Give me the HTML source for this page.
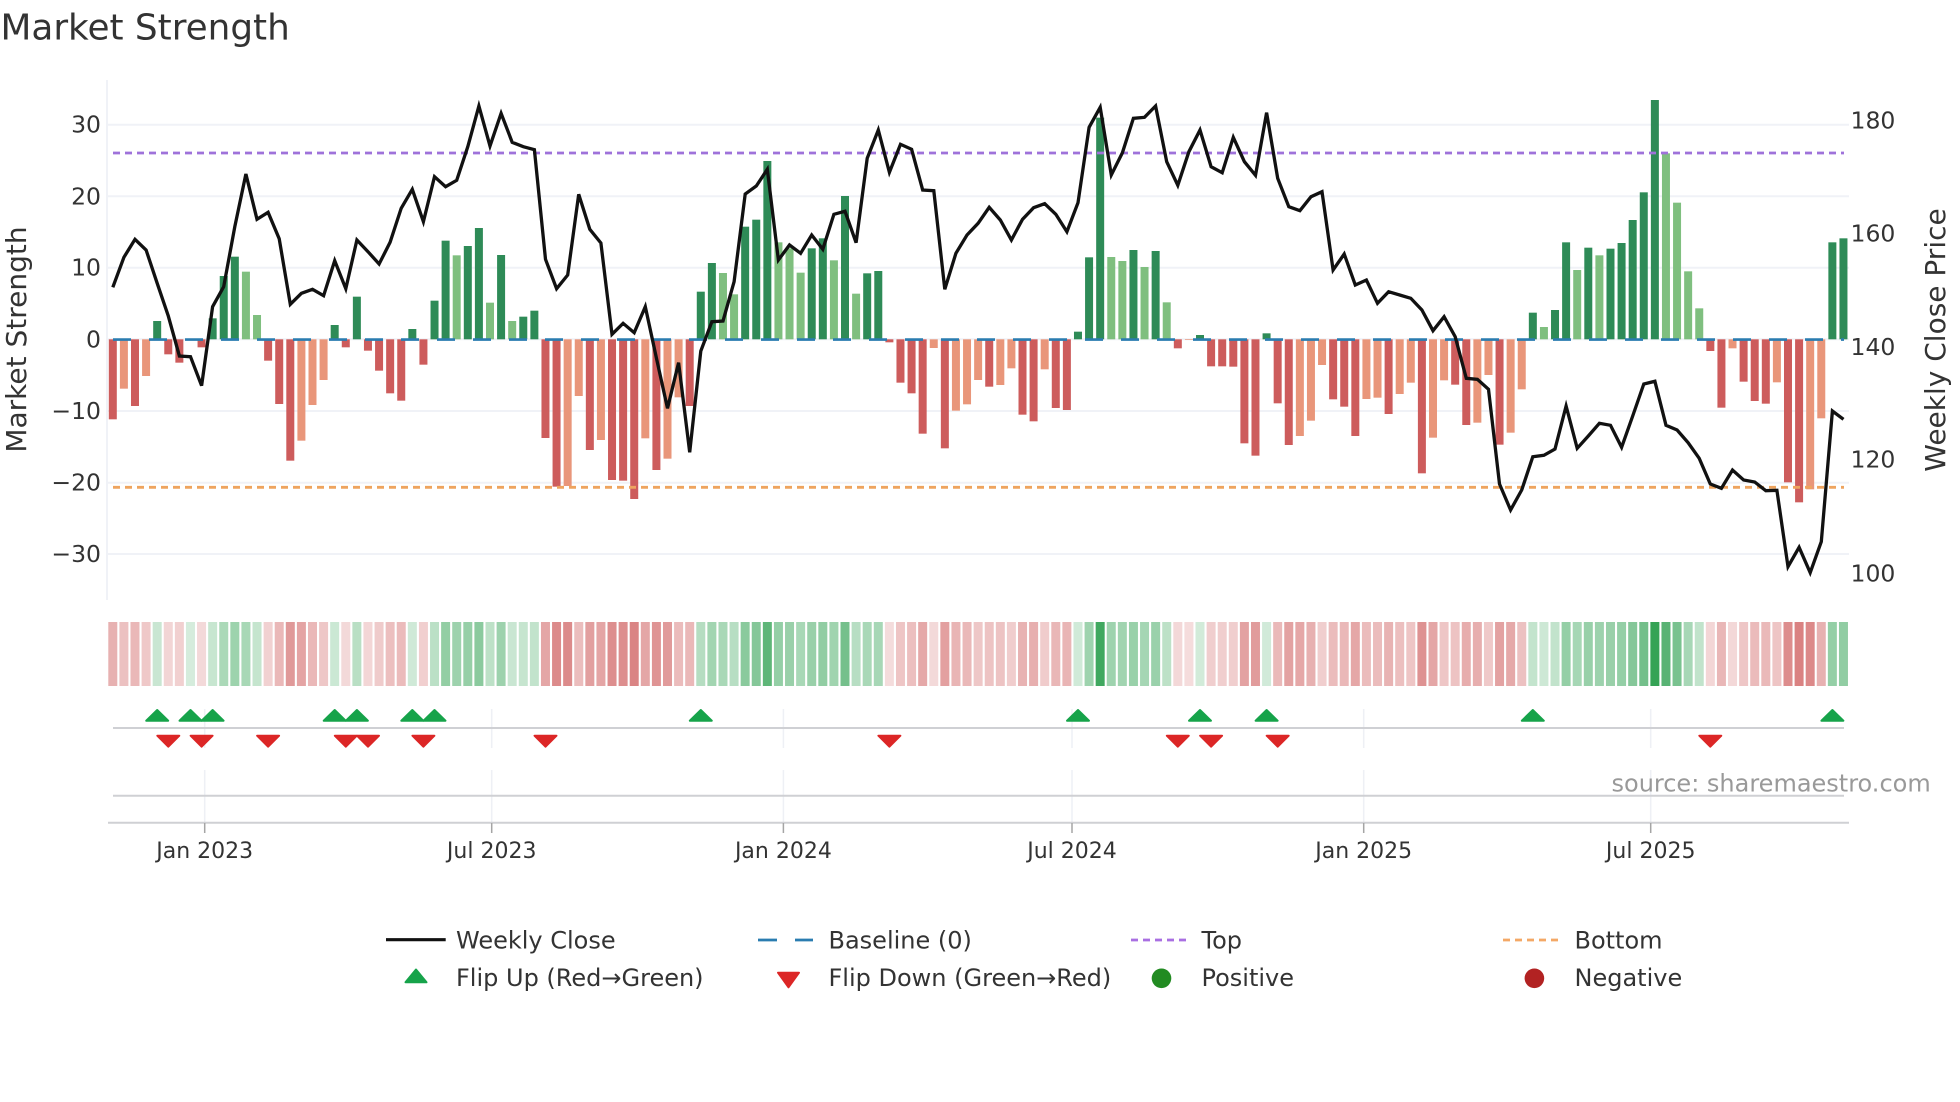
<!DOCTYPE html>
<html lang="en">
<head>
<meta charset="utf-8">
<title>Market Strength</title>
<style>
html,body{margin:0;padding:0;background:#fff;width:1960px;height:1102px;overflow:hidden}
svg{display:block;position:absolute;left:0;top:0}
text{font-family:"DejaVu Sans","Liberation Sans",sans-serif;fill:#333}
</style>
</head>
<body>
<svg id="c" xmlns="http://www.w3.org/2000/svg" width="1960" height="1102" viewBox="0 0 1960 1102">
<rect width="1960" height="1102" fill="#fff"/>
<g stroke="#f0f2f7" stroke-width="2" fill="none">
<path d="M107 80V600"/>
<path d="M107 124.7H1849M107 196.3H1849M107 267.7H1849M107 339.3H1849M107 411H1849M107 482.7H1849M107 554H1849"/>
</g>
<g stroke="#eef0f5" stroke-width="1.5" fill="none">
<path d="M204.7 709V748M204.7 770V823M491.7 709V748M491.7 770V823M783.4 709V748M783.4 770V823M1072 709V748M1072 770V823M1363.7 709V748M1363.7 770V823M1650.7 709V748M1650.7 770V823"/>
</g>
<g id="bars"></g>
<path d="M113 339.6H1844" stroke="#2a7cb0" stroke-width="2.6" stroke-dasharray="18 18" fill="none"/>
<path d="M113 153H1844" stroke="#9f72da" stroke-width="2.8" stroke-dasharray="7 5" fill="none"/>
<path d="M113 487.3H1844" stroke="#eea45f" stroke-width="2.8" stroke-dasharray="7 5" fill="none"/>
<polyline id="close" fill="none" stroke="#111" stroke-width="3.3" stroke-linejoin="miter" points=""/>
<g id="strip"></g>
<g stroke="#cfd0d4" stroke-width="2" fill="none">
<path d="M113 728H1844M113 795.7H1844M108 822.7H1849"/>
</g>
<g stroke="#a5a5a5" stroke-width="1.5" fill="none">
<path d="M204.7 823V833M491.7 823V833M783.4 823V833M1072 823V833M1363.7 823V833M1650.7 823V833"/>
</g>
<g id="flips"></g>

<text x="0.5" y="39.5" font-size="35.8">Market Strength</text>
<text transform="translate(26 339.5) rotate(-90)" text-anchor="middle" font-size="28">Market Strength</text>
<text transform="translate(1945 340) rotate(-90)" text-anchor="middle" font-size="28">Weekly Close Price</text>

<g font-size="23.5" text-anchor="end">
<text x="101" y="132.7">30</text>
<text x="101" y="204.3">20</text>
<text x="101" y="275.7">10</text>
<text x="101" y="347.3">0</text>
<text x="101" y="419">−10</text>
<text x="101" y="490.7">−20</text>
<text x="101" y="562">−30</text>
</g>
<g font-size="23.5">
<text x="1850.500" y="128.3">180</text>
<text x="1850.500" y="241.7">160</text>
<text x="1850.500" y="355">140</text>
<text x="1850.500" y="467.3">120</text>
<text x="1850.500" y="581.3">100</text>
</g>
<g font-size="22" text-anchor="middle">
<text x="204.7" y="858">Jan 2023</text>
<text x="491.7" y="858">Jul 2023</text>
<text x="783.4" y="858">Jan 2024</text>
<text x="1072" y="858">Jul 2024</text>
<text x="1363.7" y="858">Jan 2025</text>
<text x="1650.7" y="858">Jul 2025</text>
</g>
<text x="1611.500" y="791.5" font-size="24" style="fill:#999">source: sharemaestro.com</text>

<path d="M386 939.7H445.7" stroke="#111" stroke-width="3.2" fill="none"/>
<path d="M758 940H777M795 940H813" stroke="#2a7cb0" stroke-width="2.8" fill="none"/>
<path d="M1131 940H1186" stroke="#a96fe2" stroke-width="2.8" stroke-dasharray="7 5" fill="none"/>
<path d="M1503 940H1559" stroke="#f4a866" stroke-width="2.8" stroke-dasharray="7 5" fill="none"/>
<polygon points="416,969.500 426.500,982.300 405.500,982.300" fill="#16a34a" stroke="#16a34a" stroke-width="2" stroke-linejoin="round"/>
<polygon points="778,972.700 799,972.700 788.500,987.300" fill="#dc2626" stroke="#dc2626" stroke-width="2" stroke-linejoin="round"/>
<circle cx="1161.500" cy="978.300" r="9.800" fill="#228b22"/>
<circle cx="1534.400" cy="978.300" r="9.800" fill="#b22222"/>
<g font-size="24">
<text x="456" y="948.300">Weekly Close</text>
<text x="828.500" y="948.300">Baseline (0)</text>
<text x="1201.500" y="948.300">Top</text>
<text x="1574.500" y="948.300">Bottom</text>
<text x="456" y="986">Flip Up (Red→Green)</text>
<text x="828.500" y="986">Flip Down (Green→Red)</text>
<text x="1201.500" y="986">Positive</text>
<text x="1574.500" y="986">Negative</text>
</g>
</svg>
<script>
(function(){
var NS="http://www.w3.org/2000/svg";
function X(i){return 112.8+11.094*i;}
var segs=[
{p:0,n:330,d:"r268 s176 r228 s138 d963 r73 r98 d1017 r52 d955 d828 d770 l815 l945 r92 r222 r392 s332 s225 s150 d975 r52 d890 r62 r122 r190 r212 d987 r104 d902 d722 l766 d738 d684 l908 d765 l963 d950 d932 r324 r470 s468 s198 r360 s330 r450 r452 r507 s325"},
{p:90,n:340,d:"r390 s356 s172 r198 d605 d519 l549 l613 d410 d389 d213 l457 l475 l548 d475 d445 l511 d318 l611 d550 d543 r7 r128 r160 r281 s24 r325 s212 s193 s120 r140 s135 s85 r224 r244 s88 r204 r210 d725 d502 d83 l501 l513 d480 l531 d483 l637 r25 s0 d735 r79 r79 r80 r310 r347 d730 r190 r315 s288"},
{p:90,n:340,d:"s242 s75 r178 r200 r288 s177 s173 r222 s162 s128 r400 s293 s121 r134 r255 s248 s105 r314 s278 s148 d668 l711 d660 d457 l540 d473 l496 d476 d459 d390 d307 d30 l190 l338 l544 l655 r33 r203 s25 r125 r183 r191 s127 r427 r487 s448 s235 d457 d445"}
];
var col={r:"#cd5c5c",s:"#e9967a",d:"#2e8b57",l:"#7fbf7f"};
var base=339.3,idx=0;
var barsG=document.getElementById("bars"),stripG=document.getElementById("strip");
function rect(g,x,y,w,h,f){var r=document.createElementNS(NS,"rect");r.setAttribute("x",x);r.setAttribute("y",y);r.setAttribute("width",w);r.setAttribute("height",h);r.setAttribute("fill",f);g.appendChild(r);}
segs.forEach(function(s){
  s.d.split(" ").forEach(function(t){
    var c=t.charAt(0),v=parseFloat(t.slice(1)),pos=(c==="d"||c==="l");
    var y=(pos?s.p:s.n)+v/3,cx=X(idx),h=Math.abs(y-base);
    rect(barsG,(cx-4).toFixed(2),(pos?y:base).toFixed(2),8,Math.max(h,0).toFixed(2),col[c]);
    var val=h/7.16,a;
    if(pos){a=Math.min(1,.2+.023*val);
      rect(stripG,(cx-4.5).toFixed(2),622,9,64,"rgba(46,160,80,"+a.toFixed(3)+")");
    }else{a=Math.min(1,.17+.02*val);
      rect(stripG,(cx-4.5).toFixed(2),622,9,64,"rgba(195,55,55,"+a.toFixed(3)+")");
    }
    idx++;
  });
});
var z1=[862,772,718,750,850,948];
var ys=z1.map(function(v){return v/3;});
ys=ys.concat([356,356.7,385.7]);
[920,860,680,522,658,637,716,913,880,868,887,782,866,720,755,792,727,625,568,665,530,560,541,440,318,438,340,427,440,449,778,866,825,583,688,729,1003,970,998,920].forEach(function(v){ys.push(v/3);});
ys=ys.concat([358,408.3,362.7,452.3,351]);
[695,693,575,312,288,238,510,465,490,435,478,373,364,458,205,120,247,163,178,300,302,598,490,435,400,352,390,450,388,353,341,373,425,338,112,52,255,188,85,82,48,215,286,185,120,230,248,142,215,256,68,265,350,362,320,305,540,492,585,570,640,605,615,625,660,722,680,740].forEach(function(v){ys.push(90+v/3);});
[115,118,148,432,510,450,350,346,327,198,325,288,250,256,322,228,132,124,256,270,308,355,432,445,390,420,426,452,451,680,622,698,605,213,238].forEach(function(v){ys.push(340+v/3);});
document.getElementById("close").setAttribute("points",ys.map(function(y,i){return X(i).toFixed(1)+","+y.toFixed(1);}).join(" "));
var fg=document.getElementById("flips");
function tri(pts,f){var p=document.createElementNS(NS,"polygon");p.setAttribute("points",pts);p.setAttribute("fill",f);p.setAttribute("stroke",f);p.setAttribute("stroke-width","2");p.setAttribute("stroke-linejoin","round");fg.appendChild(p);}
[4,7,9,20,22,27,29,53,87,98,104,128,155].forEach(function(i){var x=X(i);
  tri((x).toFixed(1)+",710 "+(x+11).toFixed(1)+",720.700 "+(x-11).toFixed(1)+",720.700","#16a34a");});
[5,8,14,21,23,28,39,70,96,99,105,144].forEach(function(i){var x=X(i);
  tri((x-11).toFixed(1)+",735.700 "+(x+11).toFixed(1)+",735.700 "+(x).toFixed(1)+",746.700","#dc2626");});
})();
</script>
</body>
</html>
